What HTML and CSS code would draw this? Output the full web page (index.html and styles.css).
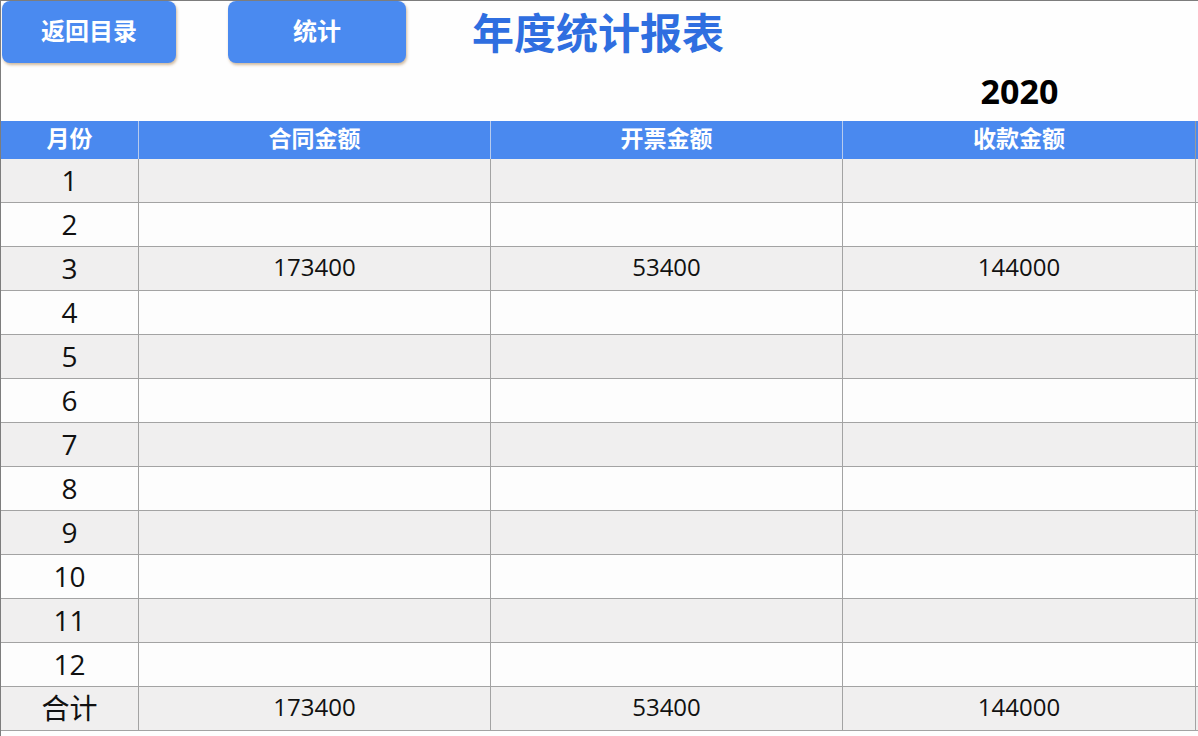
FILE: index.html
```html
<!DOCTYPE html>
<html lang="zh">
<head>
<meta charset="utf-8">
<title>年度统计报表</title>
<link rel="stylesheet" href="styles.css">
</head>
<body>
<div class="sheet">
  <div class="top">
    <button class="btn btn-back">返回目录</button>
    <button class="btn btn-stat">统计</button>
    <h1 class="title">年度统计报表</h1>
  </div>
  <div class="yearrow">
    <div></div><div></div><div></div>
    <div class="year">2020</div>
  </div>
  <div class="table">
    <div class="row head">
      <div class="cell">月份</div>
      <div class="cell">合同金额</div>
      <div class="cell">开票金额</div>
      <div class="cell">收款金额</div>
    </div>
    <div class="row odd"><div class="cell m">1</div><div class="cell"></div><div class="cell"></div><div class="cell"></div></div>
    <div class="row"><div class="cell m">2</div><div class="cell"></div><div class="cell"></div><div class="cell"></div></div>
    <div class="row odd"><div class="cell m">3</div><div class="cell v">173400</div><div class="cell v">53400</div><div class="cell v">144000</div></div>
    <div class="row"><div class="cell m">4</div><div class="cell"></div><div class="cell"></div><div class="cell"></div></div>
    <div class="row odd"><div class="cell m">5</div><div class="cell"></div><div class="cell"></div><div class="cell"></div></div>
    <div class="row"><div class="cell m">6</div><div class="cell"></div><div class="cell"></div><div class="cell"></div></div>
    <div class="row odd"><div class="cell m">7</div><div class="cell"></div><div class="cell"></div><div class="cell"></div></div>
    <div class="row"><div class="cell m">8</div><div class="cell"></div><div class="cell"></div><div class="cell"></div></div>
    <div class="row odd"><div class="cell m">9</div><div class="cell"></div><div class="cell"></div><div class="cell"></div></div>
    <div class="row"><div class="cell m">10</div><div class="cell"></div><div class="cell"></div><div class="cell"></div></div>
    <div class="row odd"><div class="cell m">11</div><div class="cell"></div><div class="cell"></div><div class="cell"></div></div>
    <div class="row"><div class="cell m">12</div><div class="cell"></div><div class="cell"></div><div class="cell"></div></div>
    <div class="row odd"><div class="cell m">合计</div><div class="cell v">173400</div><div class="cell v">53400</div><div class="cell v">144000</div></div>
  </div>
</div>
</body>
</html>
```

FILE: styles.css
```css
html, body {
  margin: 0;
  padding: 0;
  background: #fefefe;
}
body {
  font-family: "Open Sans", "Noto Sans CJK SC", sans-serif;
  color: #111;
}
.sheet {
  box-sizing: border-box;
  width: 1198px;
  height: 736px;
  border-top: 1px solid #7d7d7d;
  border-left: 1px solid #7d7d7d;
  overflow: hidden;
}
.top {
  display: flex;
  align-items: center;
  height: 63px;
}
.btn {
  box-sizing: border-box;
  height: 62px;
  border: none;
  border-radius: 8px;
  background: #4a8af0;
  color: #fff;
  font-family: "Noto Sans CJK SC", sans-serif;
  font-weight: 700;
  font-size: 24px;
  line-height: 1;
  box-shadow: 1px 2px 3px rgba(170, 130, 80, 0.55);
  padding: 0 0 5px 0;
  align-self: flex-start;
}
.btn-back {
  width: 174px;
  margin-left: 1px;
}
.btn-stat {
  width: 178px;
  margin-left: 52px;
}
.title {
  margin: 0 0 0 66px;
  padding-bottom: 3px;
  font-family: "Noto Sans CJK SC", sans-serif;
  font-weight: 700;
  font-size: 42px;
  color: #2f6ee0;
  line-height: 1;
}
.yearrow {
  display: grid;
  grid-template-columns: 138px 352px 352px 353px;
  height: 57px;
  align-items: center;
}
.year {
  text-align: center;
  font-family: "Open Sans", sans-serif;
  font-weight: 700;
  font-size: 34px;
  line-height: 1;
  color: #000;
  padding-bottom: 4px;
}
.row {
  display: grid;
  grid-template-columns: 138px 352px 352px 353px;
  height: 44px;
  box-sizing: border-box;
  border-bottom: 1px solid #a3a3a3;
  background: #fdfdfd;
}
.row.odd {
  background: #f0efef;
}
.cell {
  box-sizing: border-box;
  border-right: 1px solid #a3a3a3;
  display: flex;
  align-items: center;
  justify-content: center;
}
.row.head {
  height: 38px;
  border-bottom: none;
  background: #4a89ef;
}
.head .cell {
  border-right-color: #b7cbee;
  color: #fff;
  font-family: "Noto Sans CJK SC", sans-serif;
  font-weight: 700;
  font-size: 23px;
  line-height: 1;
  padding-bottom: 6px;
}
.head .cell:last-child {
  border-right-color: #9a9a9a;
}
.m {
  font-size: 28px;
  line-height: 1;
  font-family: "Open Sans", "Noto Sans CJK SC", sans-serif;
  color: #111;
  padding-bottom: 2px;
}
.v {
  font-size: 24px;
  line-height: 1;
  color: #111;
  padding-bottom: 4px;
}
```
